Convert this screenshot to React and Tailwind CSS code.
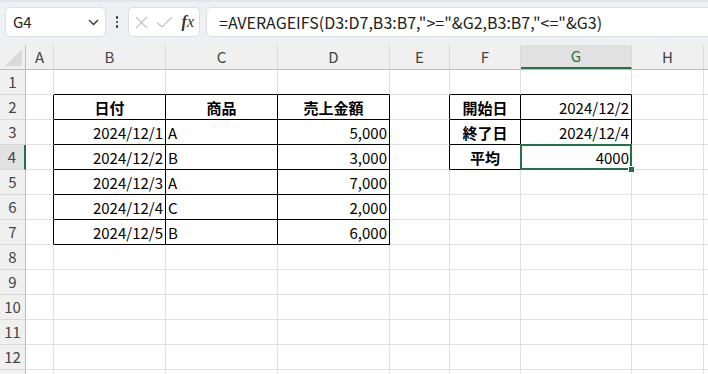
import React from "react";

const FONT = { fontFamily: '"Noto Sans CJK JP", "Noto Sans", sans-serif' };

const cols = [
  { k: "A", w: "w-[28px]" },
  { k: "B", w: "w-[112px]" },
  { k: "C", w: "w-[112px]" },
  { k: "D", w: "w-[112px]" },
  { k: "E", w: "w-[60px]" },
  { k: "F", w: "w-[71px]" },
  { k: "G", w: "w-[111px]" },
  { k: "H", w: "w-[72px]" },
  { k: "I", w: "w-[72px]" },
];

// cell content: [text, align, bold]
const cells = {
  B2: ["日付", "c", true], C2: ["商品", "c", true], D2: ["売上金額", "c", true],
  B3: ["2024/12/1", "r"], C3: ["A", "l"], D3: ["5,000", "r"],
  B4: ["2024/12/2", "r"], C4: ["B", "l"], D4: ["3,000", "r"],
  B5: ["2024/12/3", "r"], C5: ["A", "l"], D5: ["7,000", "r"],
  B6: ["2024/12/4", "r"], C6: ["C", "l"], D6: ["2,000", "r"],
  B7: ["2024/12/5", "r"], C7: ["B", "l"], D7: ["6,000", "r"],
  F2: ["開始日", "c", true], G2: ["2024/12/2", "r"],
  F3: ["終了日", "c", true], G3: ["2024/12/4", "r"],
  F4: ["平均", "c", true], G4: ["4000", "r"],
};

const inTable = (r, c) =>
  (r >= 2 && r <= 7 && c >= 1 && c <= 3) || (r >= 2 && r <= 4 && c >= 5 && c <= 6);

const alignCls = { l: "justify-start pl-[2px]", r: "justify-end pr-[2px]", c: "justify-center" };

function Cell({ r, c }) {
  const key = cols[c].k + r;
  const data = cells[key];
  const right = inTable(r, c) || inTable(r, c + 1) ? "border-r-black" : "border-r-[#e1e1e1]";
  const bottom = inTable(r, c) || inTable(r + 1, c) ? "border-b-black" : "border-b-[#e1e1e1]";
  const selected = key === "G4";
  return (
    <div className={`relative flex items-center h-[25px] shrink-0 border-r border-b ${right} ${bottom} ${cols[c].w} ${data ? alignCls[data[1]] : ""} ${selected ? "z-10" : ""}`}>
      {data && (
        <span className={`text-[15px] leading-none text-black whitespace-nowrap ${data[2] ? "font-bold" : ""}`}>{data[0]}</span>
      )}
      {selected && (
        <>
          <div className="absolute -left-[1px] -top-[1px] -right-[1px] -bottom-[1px] border-2 border-[#217346]" />
          <div className="absolute -right-[4px] -bottom-[4px] w-[7px] h-[7px] bg-[#217346] border border-white" />
        </>
      )}
    </div>
  );
}

function Toolbar() {
  return (
    <div className="h-[45px] bg-[#eef0f3] border-t-2 border-t-[#e2e5e9] flex items-start pt-[5px] pl-[5px]">
      <div className="w-[101px] h-[30px] bg-white rounded-[5px] border border-[#dcdee2] flex items-center justify-between pl-[7px] pr-[6px]">
        <span className="text-[15px] text-[#222]">G4</span>
        <svg width="11" height="7" viewBox="0 0 11 7" fill="none" stroke="#333" strokeWidth="1.3">
          <path d="M1 1l4.5 4.5L10 1" />
        </svg>
      </div>
      <div className="w-[22px] h-[30px] flex flex-col items-center justify-center gap-[2px]">
        <span className="w-[2.5px] h-[2.5px] rounded-full bg-[#333]" />
        <span className="w-[2.5px] h-[2.5px] rounded-full bg-[#333]" />
        <span className="w-[2.5px] h-[2.5px] rounded-full bg-[#333]" />
      </div>
      <div className="w-[72px] h-[30px] bg-white rounded-[5px] border border-[#dcdee2] flex items-center pl-[6px] pr-[5px] justify-between">
        <svg width="13" height="13" viewBox="0 0 13 13" fill="none" stroke="#c4c4c4" strokeWidth="1.2">
          <path d="M1 1l11 11M12 1L1 12" />
        </svg>
        <svg width="17" height="12" viewBox="0 0 17 12" fill="none" stroke="#c4c4c4" strokeWidth="1.2">
          <path d="M1 6.5l5 4.5L16 1" />
        </svg>
        <span className="text-[16px] italic text-[#333] leading-none" style={{ fontFamily: '"Liberation Serif", serif' }}>
          <span className="font-bold">f</span>x
        </span>
      </div>
      <div className="ml-[6px] flex-1 h-[30px] bg-white rounded-l-[5px] border border-r-0 border-[#dcdee2] flex items-center pl-[12px]">
        <span className="text-[16px] text-[#222] whitespace-nowrap">=AVERAGEIFS(D3:D7,B3:B7,"&gt;="&amp;G2,B3:B7,"&lt;="&amp;G3)</span>
      </div>
    </div>
  );
}

function HeaderRow() {
  return (
    <div className="flex h-[25px] bg-[#f0f0f0] border-b border-b-[#bdbdbd]">
      <div className="w-[26px] shrink-0 border-r border-r-[#bdbdbd] relative">
        <svg className="absolute right-[3px] bottom-[3px]" width="17" height="17" viewBox="0 0 17 17">
          <polygon points="17,0 17,17 0,17" fill="#dadada" />
        </svg>
      </div>
      {cols.map((col) => (
        <div
          key={col.k}
          className={`${col.w} shrink-0 border-r border-r-[#d9d9d9] flex items-center justify-center text-[15px] text-[#444] ${col.k === "G" ? "bg-[#e1e1e1] border-b-2 border-b-[#217346] text-[#217346]" : ""}`}
        >
          {col.k !== "I" && col.k}
        </div>
      ))}
    </div>
  );
}

export default function App() {
  const rows = Array.from({ length: 13 }, (_, i) => i + 1);
  return (
    <div className="w-[708px] h-[374px] overflow-hidden bg-white" style={FONT}>
      <Toolbar />
      <HeaderRow />
      {rows.map((r) => (
        <div key={r} className="flex">
          <div
            className={`w-[26px] h-[25px] shrink-0 flex items-center justify-center text-[15px] text-[#444] border-b border-b-[#d9d9d9] ${r === 4 ? "bg-[#e1e1e1] border-r-2 border-r-[#217346]" : "bg-[#f0f0f0] border-r border-r-[#bdbdbd]"}`}
          >
            {r < 13 && r}
          </div>
          {cols.map((col, c) => (
            <Cell key={col.k} r={r} c={c} />
          ))}
        </div>
      ))}
    </div>
  );
}
